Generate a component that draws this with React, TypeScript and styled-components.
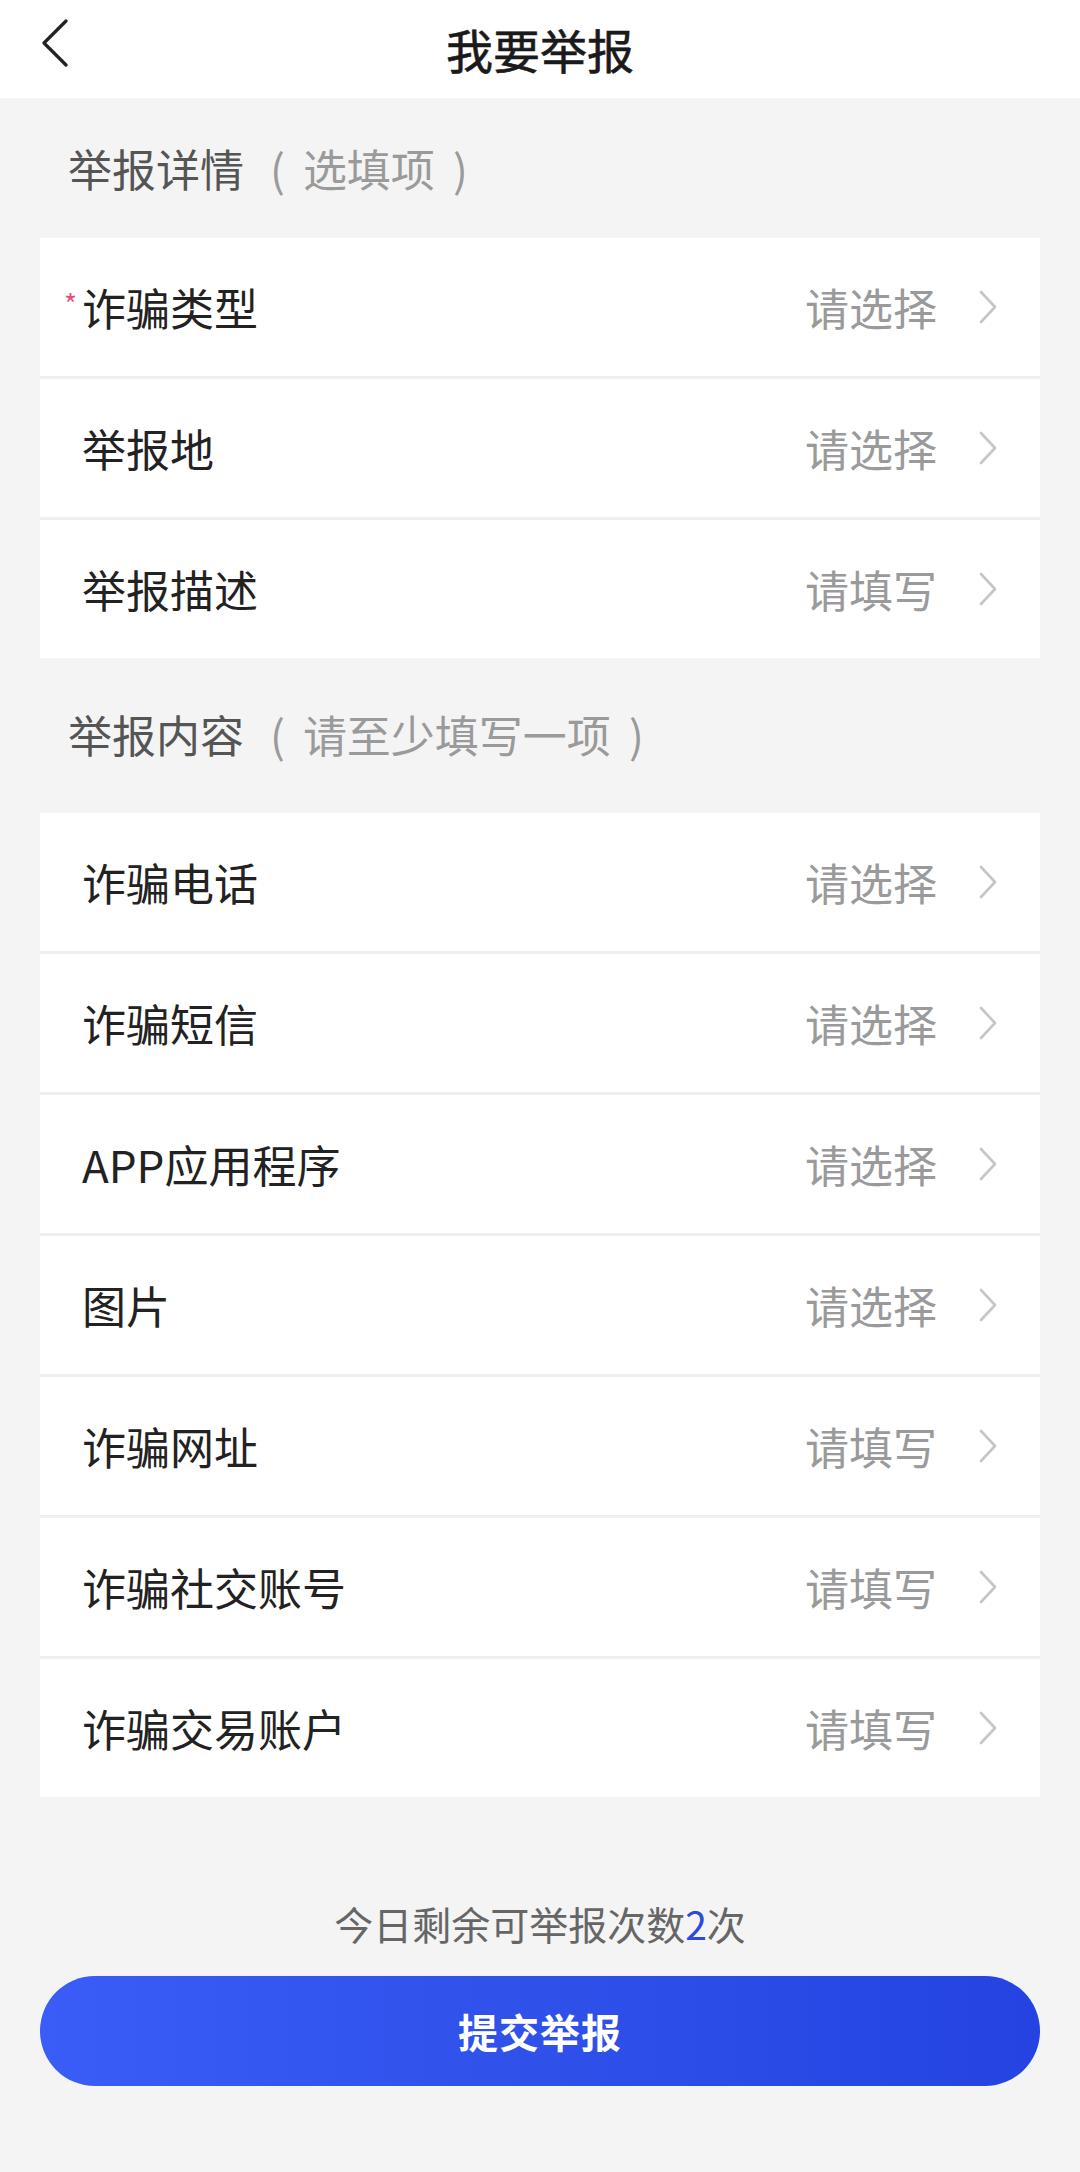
import React from "react";
import styled, { createGlobalStyle } from "styled-components";

const Global = createGlobalStyle`
  html, body { margin: 0; padding: 0; background: #f4f4f4; }
  body { font-family: "Noto Sans CJK SC", "Noto Sans", sans-serif; }
  * { box-sizing: border-box; }
`;

const Page = styled.div`
  width: 1080px;
  min-height: 2172px;
  background: #f4f4f4;
  display: flex;
  flex-direction: column;
`;

const Header = styled.header`
  height: 98px;
  background: #ffffff;
  display: flex;
  align-items: center;
  justify-content: center;
  position: relative;
`;

const BackButton = styled.button`
  position: absolute;
  left: 38px;
  top: 18px;
  width: 34px;
  height: 50px;
  border: none;
  background: transparent;
  padding: 0;
  display: flex;
  align-items: center;
  justify-content: center;
`;

const HeaderTitle = styled.h1`
  margin: 0;
  font-size: 47px;
  font-weight: 400;
  -webkit-text-stroke: 0.6px #1a1a1a;
  color: #1a1a1a;
  line-height: 1;
  padding-bottom: 2px;
`;

const SectionTitle = styled.div<{ $pt: number; $pb: number }>`
  padding: ${(p) => p.$pt}px 0 ${(p) => p.$pb}px 68px;
  font-size: 44px;
  line-height: 44px;
  color: #555555;
  display: flex;
  align-items: center;
`;

const Hint = styled.span`
  color: #9a9a9a;
  margin-left: 26px;
  display: inline-flex;
  align-items: center;
  gap: 18px;
`;

const Card = styled.div`
  margin: 0 40px;
  background: #ffffff;
  display: flex;
  flex-direction: column;
`;

const Row = styled.div`
  height: 138px;
  display: flex;
  align-items: center;
  padding: 0 41px 0 42px;
  & + & {
    border-top: 3px solid #efefef;
    height: 141px;
  }
`;

const Label = styled.span`
  position: relative;
  flex: 1;
  font-size: 44px;
  color: #222222;
  line-height: 1;
`;

const Required = styled.span`
  position: absolute;
  left: -18px;
  top: 4px;
  font-size: 28px;
  line-height: 1;
  color: #e4507a;
`;

const Value = styled.span`
  font-size: 44px;
  color: #9a9a9a;
  line-height: 1;
  margin-right: 40px;
`;

const Footer = styled.div`
  display: flex;
  flex-direction: column;
  align-items: stretch;
  padding: 104px 40px 0;
`;

const Quota = styled.div`
  text-align: center;
  font-size: 39px;
  line-height: 44px;
  color: #666666;
`;

const Num = styled.span`
  color: #2a4ae0;
`;

const Submit = styled.button`
  margin-top: 31px;
  height: 110px;
  border: none;
  border-radius: 55px;
  background: linear-gradient(90deg, #3a5cf7 0%, #2f51ea 50%, #2443e2 100%);
  color: #ffffff;
  font-family: "Noto Sans CJK SC", sans-serif;
  font-size: 40px;
  font-weight: 700;
  letter-spacing: 1px;
`;

const Chevron = () => (
  <svg width="22" height="36" viewBox="0 0 22 36" fill="none">
    <polyline points="4,3 18,18 4,33" stroke="#c6c6c6" strokeWidth="2.6" strokeLinecap="round" strokeLinejoin="round" />
  </svg>
);

const BackIcon = () => (
  <svg width="30" height="48" viewBox="0 0 30 48" fill="none">
    <polyline points="26,2 4,24 26,46" stroke="#222" strokeWidth="3.2" strokeLinecap="round" strokeLinejoin="round" />
  </svg>
);

type Item = { label: string; value: string; required?: boolean };

const details: Item[] = [
  { label: "诈骗类型", value: "请选择", required: true },
  { label: "举报地", value: "请选择" },
  { label: "举报描述", value: "请填写" },
];

const contents: Item[] = [
  { label: "诈骗电话", value: "请选择" },
  { label: "诈骗短信", value: "请选择" },
  { label: "APP应用程序", value: "请选择" },
  { label: "图片", value: "请选择" },
  { label: "诈骗网址", value: "请填写" },
  { label: "诈骗社交账号", value: "请填写" },
  { label: "诈骗交易账户", value: "请填写" },
];

const List = ({ items }: { items: Item[] }) => (
  <Card>
    {items.map((it) => (
      <Row key={it.label}>
        <Label>
          {it.required && <Required>*</Required>}
          {it.label}
        </Label>
        <Value>{it.value}</Value>
        <Chevron />
      </Row>
    ))}
  </Card>
);

export default function App() {
  return (
    <Page>
      <Global />
      <Header>
        <BackButton aria-label="返回">
          <BackIcon />
        </BackButton>
        <HeaderTitle>我要举报</HeaderTitle>
      </Header>
      <SectionTitle $pt={48} $pb={48}>
        举报详情
        <Hint>
          <span>(</span>
          <span>选填项</span>
          <span>)</span>
        </Hint>
      </SectionTitle>
      <List items={details} />
      <SectionTitle $pt={54} $pb={57}>
        举报内容
        <Hint>
          <span>(</span>
          <span>请至少填写一项</span>
          <span>)</span>
        </Hint>
      </SectionTitle>
      <List items={contents} />
      <Footer>
        <Quota>
          今日剩余可举报次数<Num>2</Num>次
        </Quota>
        <Submit>提交举报</Submit>
      </Footer>
    </Page>
  );
}
